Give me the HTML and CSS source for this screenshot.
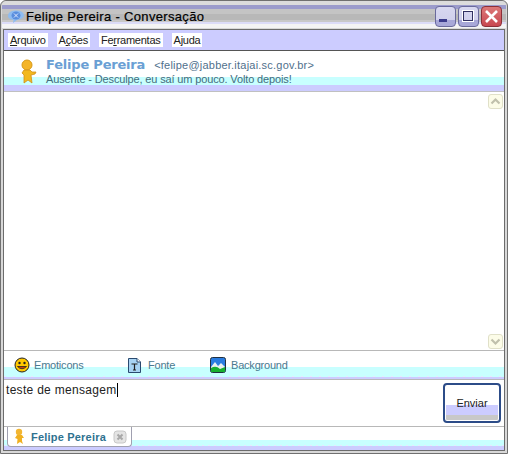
FILE: index.html
```html
<!DOCTYPE html>
<html lang="pt">
<head>
    <meta charset="UTF-8">
    <title>Felipe Pereira - Conversação</title>
    <link rel="stylesheet" href="styles.css">
</head>
<body>

<div class="window">
    <div class="titlebar">
        <svg class="app-icon" width="18" height="16" viewBox="0 0 18 16">
            <path d="M1 8 Q1 3 8 2.500 Q16 2 17 7 Q17 11 10 12 L6 15 L6.500 12 Q1 11 1 8Z" fill="#8fbcf0"/>
            <ellipse cx="9" cy="7.500" rx="4.500" ry="4" fill="#5a8ede"/>
            <path d="M7 5.500 L11 9.500 M11 5.500 L7 9.500" stroke="#dfe8ff" stroke-width="1"/>
        </svg>
        <span class="title-text">Felipe Pereira - Conversação</span>
        <div class="win-buttons">
            <div class="win-btn">
                <svg width="21" height="21" viewBox="0 0 21 21"><rect x="4" y="13" width="8" height="3" fill="#3c3c8c"/></svg>
            </div>
            <div class="win-btn">
                <svg width="21" height="21" viewBox="0 0 21 21"><rect x="4.500" y="4.500" width="11" height="11" fill="none" stroke="#fff" stroke-width="1"/><rect x="5.500" y="5.500" width="9" height="9" fill="none" stroke="#303060" stroke-width="1"/></svg>
            </div>
            <div class="win-btn close">
                <svg width="21" height="21" viewBox="0 0 21 21"><path d="M5 5 L16 16 M16 5 L5 16" stroke="#fff" stroke-width="2.600"/></svg>
            </div>
        </div>
    </div>

    <div class="content">
        <div class="menubar">
            <span class="menu-item"><u>A</u>rquivo</span>
            <span class="menu-item">A<u>ç</u>ões</span>
            <span class="menu-item">Fe<u>r</u>ramentas</span>
            <span class="menu-item">A<u>j</u>uda</span>
        </div>

        <div class="contact">
            <svg class="buddy" width="20" height="30" viewBox="0 0 20 30">
                <circle cx="10" cy="8" r="5" fill="#f4b428" stroke="#d89a18"/>
                <path d="M7 13 L13 13 L15 15 L19 15 L18 17 L14 18 L15 26 L11 23 L7 26 L7 18 L5 16Z" fill="#f2b81e" stroke="#d09018" stroke-width="0.800"/>
            </svg>
            <div class="contact-info">
                <div class="contact-line">
                    <span class="contact-name">Felipe Pereira</span>
                    <span class="contact-jid">&lt;felipe@jabber.itajai.sc.gov.br&gt;</span>
                </div>
                <div class="contact-status">Ausente - Desculpe, eu saí um pouco. Volto depois!</div>
            </div>
        </div>
        <div class="band header-band"></div>

        <div class="log">
            <div class="scroll-btn">
                <svg width="15" height="15" viewBox="0 0 15 15"><path d="M3.500 9.500 L7.500 5.500 L11.500 9.500" fill="none" stroke="#c0c0ac" stroke-width="2.200"/></svg>
            </div>
            <div class="scroll-btn">
                <svg width="15" height="15" viewBox="0 0 15 15"><path d="M3.500 5.500 L7.500 9.500 L11.500 5.500" fill="none" stroke="#c0c0ac" stroke-width="2.200"/></svg>
            </div>
        </div>

        <div class="toolbar">
            <div class="tool emoticons">
                <svg width="16" height="16" viewBox="0 0 16 16">
                    <circle cx="8" cy="8" r="7" fill="#ffc800" stroke="#222"/>
                    <circle cx="5.500" cy="6" r="1.200" fill="#222"/>
                    <circle cx="10.500" cy="6" r="1.200" fill="#222"/>
                    <path d="M3.500 9.500 Q8 14 12.500 9.500Z" fill="#d04010" stroke="#222" stroke-width="0.800"/>
                </svg>
                Emoticons
            </div>
            <div class="tool fonte">
                <svg width="15" height="17" viewBox="0 0 15 17">
                    <path d="M1.500 1.500 H10 L13.500 5 V15.500 H1.500Z" fill="#a8d4f4" stroke="#2a4a70"/>
                    <path d="M10 1.500 V5 H13.500" fill="#fff" stroke="#2a4a70"/>
                    <path d="M4.500 7 H10.500 M7.500 7 V13 M6 13 H9" fill="none" stroke="#222" stroke-width="1.200"/>
                </svg>
                Fonte
            </div>
            <div class="tool background">
                <svg width="16" height="16" viewBox="0 0 16 16">
                    <rect x="0.500" y="0.500" width="15" height="15" rx="2" fill="#2a7ce0" stroke="#203040"/>
                    <path d="M1 10 L5 5 L8 9 L11 6 L15 10 V13 H1Z" fill="#e8f0f0"/>
                    <path d="M1 11 Q6 8 10 12 L15 10 V15 H1Z" fill="#18b030"/>
                </svg>
                Background
            </div>
        </div>
        <div class="band toolbar-band"></div>

        <div class="compose">
            <div class="compose-text">teste de mensagem<span class="caret"></span></div>
            <div class="send-btn"><span class="send-label">Enviar</span></div>
        </div>

        <div class="tabstrip">
            <div class="tab">
                <svg width="11" height="17" viewBox="0 0 11 17">
                    <circle cx="5" cy="4" r="3.200" fill="#f2b632"/>
                    <path d="M3 7 H8 L10 10 H8 L8 13 L9 16 L6 14 L3 16 L3.500 11 L1 10Z" fill="#f0b020"/>
                </svg>
                <span class="tab-label">Felipe Pereira</span>
                <svg width="14" height="14" viewBox="0 0 14 14">
                    <rect x="1" y="1" width="12" height="12" rx="3" fill="#e4e4e4" stroke="#c8c8c8"/>
                    <path d="M4.500 4.500 L9.500 9.500 M9.500 4.500 L4.500 9.500" stroke="#a8a8a8" stroke-width="2"/>
                </svg>
            </div>
        </div>
    </div>
</div>

</body>
</html>
```

FILE: styles.css
```css
html, body {
    margin: 0;
    height: 100%;
    background-color: #fff;
}
body {
    font-family: "Liberation Sans", sans-serif;
    overflow: hidden;
}
.window {
    box-sizing: border-box;
    width: 508px;
    height: 454px;
    display: flex;
    flex-direction: column;
    background-color: #d8d8d8;
    border: 1px solid #707070;
    border-radius: 6px 6px 0 0;
    padding: 0 2px 2px 2px;
}
.titlebar {
    height: 27px;
    margin: 0 -1px;
    padding: 0 4px 0 5px;
    display: flex;
    align-items: center;
    flex-shrink: 0;
    border-radius: 5px 5px 0 0;
    background: linear-gradient(#dcdcdc 0, #dcdcdc 4px, #9c9ccc 4px, #9c9ccc 8px, #c4c4c4 8px, #c4c4c4 13px, #b8b8b8 13px, #b8b8b8 19px, #c8c8c8 19px, #c8c8c8 21px, #dcdcf8 21px, #dcdcf8 23px, #f4f4f4 23px);
}
.app-icon {
    margin-right: 1px;
    margin-top: 3px;
}
.title-text {
    font-size: 13px;
    letter-spacing: 0.33px;
    color: #000;
    margin-top: 3px;
    -webkit-text-stroke: 0.2px #000;
}
.win-buttons {
    margin-left: auto;
    display: flex;
    gap: 2px;
    align-self: flex-start;
    margin-top: 5px;
}
.win-btn {
    width: 21px;
    height: 21px;
    box-sizing: border-box;
    border: 1px solid #6a6a9c;
    border-radius: 4px;
    background: linear-gradient(#d8d8f0 0, #d0d0ec 70%, #a8a8d8 70%, #a8a8d8 100%);
    overflow: hidden;
}
.win-btn svg {
    display: block;
    margin: -1px;
}
.win-btn.close {
    border-color: #8c3038;
    background: linear-gradient(#dc7878, #c84850);
}
.content {
    flex: 1;
    display: flex;
    flex-direction: column;
    min-height: 0;
    border: 1px solid #6c6c6c;
    background-color: #fff;
    margin-top: 1px;
}
.menubar {
    height: 20px;
    display: flex;
    align-items: center;
    gap: 9px;
    padding-left: 4px;
    background-color: #ccccff;
    border-bottom: 1px solid #555;
    flex-shrink: 0;
}
.menu-item {
    background-color: #fff;
    font-size: 11px;
    letter-spacing: -0.25px;
    line-height: 14px;
    padding: 0 2px;
    color: #222;
}
.contact {
    height: 26px;
    display: flex;
    flex-shrink: 0;
    padding-left: 13px;
}
.buddy {
    flex-shrink: 0;
    margin-top: 6px;
    position: relative;
    z-index: 1;
}
.contact-info {
    margin-left: 9px;
    padding-top: 4px;
    white-space: nowrap;
}
.contact-line {
    box-sizing: border-box;
    display: flex;
    align-items: baseline;
    height: 17px;
    padding-top: 2px;
}
.contact-name {
    font-family: "DejaVu Sans", sans-serif;
    font-weight: bold;
    font-size: 13px;
    letter-spacing: -0.2px;
    color: #6a9fd4;
}
.contact-jid {
    margin-left: 9px;
    font-size: 11px;
    letter-spacing: 0.22px;
    color: #50708c;
}
.contact-status {
    position: relative;
    z-index: 1;
    font-size: 11px;
    line-height: 14px;
    letter-spacing: -0.14px;
    color: #456c7c;
}
.band {
    flex-shrink: 0;
    background: linear-gradient(#c8ffff 0, #c8ffff 8px, #ccccff 8px);
}
.header-band {
    height: 14px;
    border-bottom: 1px solid #c0c0c0;
}
.log {
    flex: 1;
    display: flex;
    flex-direction: column;
    justify-content: space-between;
    align-items: flex-end;
    padding: 2px 1px 1px 0;
    border-bottom: 1px solid #b8b8b8;
}
.scroll-btn {
    width: 15px;
    height: 15px;
    box-sizing: border-box;
    border: 1px solid #e0e0c8;
    border-radius: 3px;
    background-color: #fcfce8;
    overflow: hidden;
}
.scroll-btn svg {
    display: block;
    margin: -1px;
}
.toolbar {
    height: 16px;
    display: flex;
    position: relative;
    z-index: 1;
    flex-shrink: 0;
    font-size: 11px;
    letter-spacing: -0.2px;
    color: #4a7a90;
}
.tool {
    display: flex;
    align-items: center;
    height: 24px;
    margin-top: 2px;
}
.emoticons {
    gap: 4px;
    padding-left: 10px;
    width: 113px;
}
.fonte {
    gap: 6px;
    width: 83px;
}
.background {
    gap: 5px;
}
.band.toolbar-band {
    height: 12px;
    background: repeating-linear-gradient(90deg, #e8e8ff 0 2px, transparent 2px 9px) 0 9px / 100% 1px no-repeat, linear-gradient(#c8ffff 0, #c8ffff 10px, #ccccff 10px);
    border-bottom: 1px solid #b8b8b8;
}
.compose {
    height: 46px;
    display: flex;
    justify-content: space-between;
    flex-shrink: 0;
    border-bottom: 1px solid #b8b8b8;
}
.compose-text {
    font-size: 12px;
    letter-spacing: 0.3px;
    line-height: 15px;
    padding: 3px 0 0 2px;
    color: #222;
}
.caret {
    display: inline-block;
    width: 1px;
    height: 14px;
    background-color: #000;
    vertical-align: -3px;
}
.send-btn {
    box-sizing: border-box;
    width: 58px;
    height: 40px;
    margin: 3px 3px 0 0;
    padding: 1px;
    border: 2px solid #2c4c88;
    border-radius: 4px;
    background: linear-gradient(#fff 0, #fff 20px, #ccccff 20px, #ccccff 30px, #c8c8c8 30px);
    background-clip: content-box;
    text-align: center;
    font-size: 11px;
    line-height: 34px;
    color: #222;
}
.tabstrip {
    flex: 0 0 23px;
    background: repeating-linear-gradient(90deg, #e8e8ff 0 2px, transparent 2px 6px) 0 18px / 100% 1px no-repeat, linear-gradient(#fff 0, #fff 13px, #c8ffff 13px, #c8ffff 19px, #ccccff 19px);
}
.tab {
    box-sizing: border-box;
    width: 125px;
    height: 20px;
    margin-left: 3px;
    border: 1px solid #a0a0b0;
    border-top: none;
    border-radius: 0 0 4px 4px;
    background-color: #fff;
    display: flex;
    align-items: center;
    gap: 6px;
    padding-left: 6px;
    font-size: 11px;
    font-weight: bold;
    letter-spacing: 0.2px;
    color: #2f7290;
}
.tab-label {
    width: 76px;
    white-space: nowrap;
}
```
